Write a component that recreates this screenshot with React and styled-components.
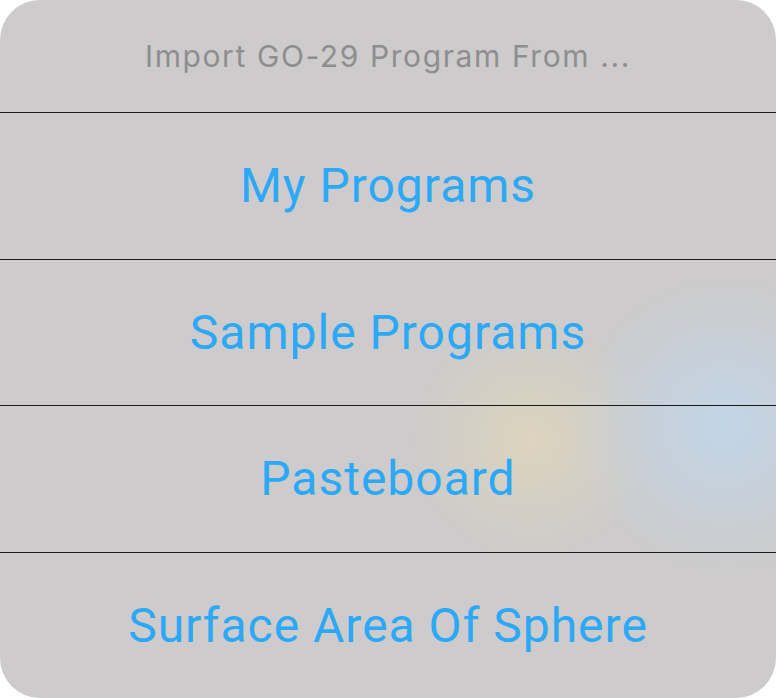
import React from 'react'
import styled, { createGlobalStyle } from 'styled-components'

const GlobalStyle = createGlobalStyle`
  html, body {
    margin: 0;
    padding: 0;
    background: #ffffff;
  }
  body {
    font-family: Roboto, "Liberation Sans", sans-serif;
  }
`

const Sheet = styled.div`
  width: 776px;
  height: 698px;
  border-radius: 40px;
  overflow: hidden;
  display: grid;
  grid-template-rows: 112px 1fr 1fr 1fr 1fr;
  background:
    radial-gradient(circle at 725px 425px, rgba(192, 214, 234, 0.9) 0, rgba(192, 214, 234, 0) 150px),
    radial-gradient(circle at 530px 440px, rgba(224, 214, 186, 0.8) 0, rgba(224, 214, 186, 0) 120px),
    #cdcbcb;
`

const Title = styled.div`
  display: flex;
  align-items: center;
  justify-content: center;
  font-family: Inter, Roboto, sans-serif;
  font-size: 30px;
  letter-spacing: 1.6px;
  color: #8e8e8e;
`

const Option = styled.button`
  border: none;
  background: transparent;
  border-top: 1px solid #1c1c1c;
  display: flex;
  align-items: center;
  justify-content: center;
  font-family: inherit;
  font-size: 48px;
  letter-spacing: 1px;
  color: #2ba9f6;
  padding: 0;
  cursor: pointer;
`

const options = [
  { label: 'My Programs' },
  { label: 'Sample Programs' },
  { label: 'Pasteboard' },
  { label: 'Surface Area Of Sphere' },
]

const App = () => {
  return (
    <>
      <GlobalStyle />
      <Sheet>
        <Title>Import GO-29 Program From ...</Title>
        {options.map(o => (
          <Option key={o.label}>{o.label}</Option>
        ))}
      </Sheet>
    </>
  )
}

export default App
